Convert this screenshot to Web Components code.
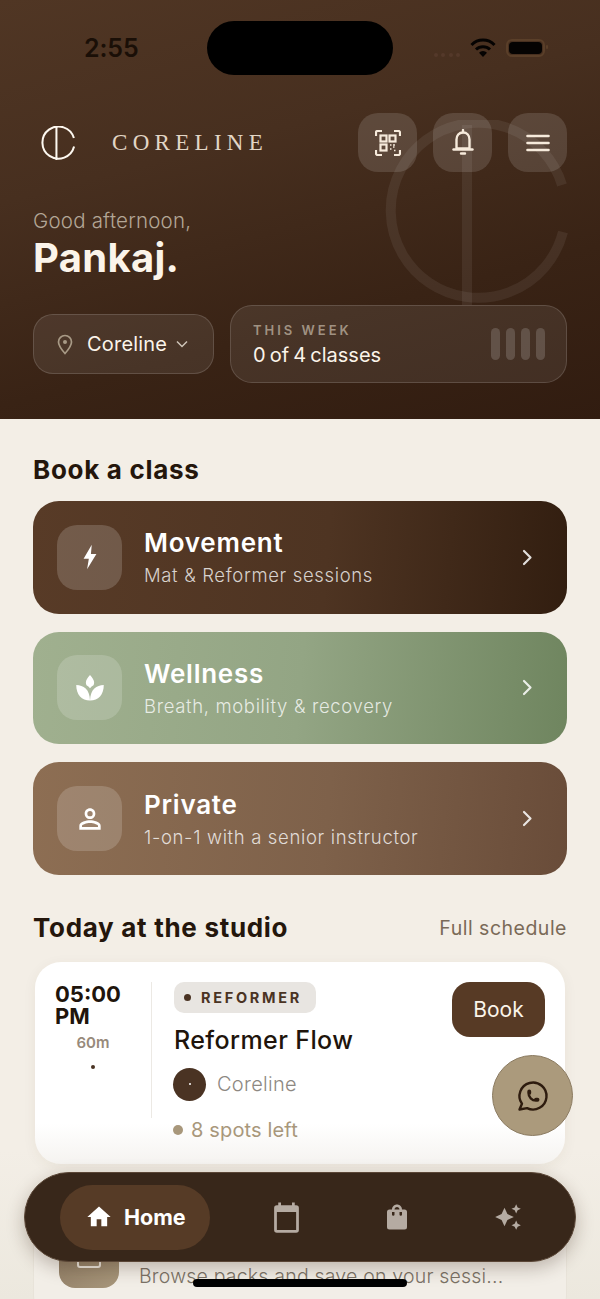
<!DOCTYPE html>
<html lang="en">
<head>
<meta charset="utf-8">
<title>Coreline</title>
<style>
	html, body { margin: 0; height: 1299px; overflow: hidden; }
	body { font-family: Inter, "Liberation Sans", sans-serif; background: linear-gradient(to bottom, #f3eee6 0, #f3eee6 1150px, #ece8de 1299px); }
	.content { display: block; padding: 34px 33px 0; }
</style>
</head>
<body>
<script>
// Coreline mark, the same shape for the small logo and the header watermark
const mark = (stroke) => `<g fill="none" stroke="currentColor" stroke-width="${stroke}"><path d="M179 65A87.500 87.500 0 1 0 180 112"/><path d="M84 5V185"/></g>`;

class BaseEl extends HTMLElement {
	connectedCallback() {
		if (!this.shadowRoot) this.attachShadow({ mode: "open" });
		this.shadowRoot.innerHTML = this.render();
	}
}

class StatusBar extends BaseEl {
	render() {
		return `<style>
			:host { display: flex; align-items: center; height: 96px; margin-bottom: 17px; padding: 0 55px 0 84px; position: relative; color: #1a0f07; }
			.time { font: 600 25px/1 Inter, sans-serif; letter-spacing: -.1px; }
			.notch { position: absolute; left: 207px; top: 21px; width: 186px; height: 54px; border-radius: 27px; background: #000; }
			.right { margin-left: auto; display: flex; align-items: center; gap: 10px; }
			.dots { display: flex; gap: 3.500px; margin-top: 14px; }
			.dots i { width: 4px; height: 4px; border-radius: 50%; background: #54392a; }
			.batt { width: 33px; height: 12px; border: 2px solid #5a3f29; border-radius: 6px; padding: 1px; position: relative; }
			.batt b { display: block; height: 100%; background: #050302; border-radius: 4px; }
			.batt::after { content: ""; position: absolute; right: -5px; top: 4px; width: 2px; height: 4px; background: #5a3f29; border-radius: 1px; }
		</style>
		<span class="time">2:55</span>
		<div class="notch"></div>
		<div class="right">
			<div class="dots"><i></i><i></i><i></i><i></i></div>
			<svg width="26" height="20" viewBox="0 0 26 20" fill="none" stroke="#050302" stroke-width="3"><path d="M1.500 7a16 16 0 0 1 23 0"/><path d="M6 11.500a10 10 0 0 1 14 0"/><path d="M13 19l-4-4.200a5.600 5.600 0 0 1 8 0z" fill="#050302" stroke="none"/></svg>
			<div class="batt"><b></b></div>
		</div>`;
	}
}

class IconButton extends BaseEl {
	render() {
		return `<style>
			:host { display: flex; align-items: center; justify-content: center; width: 59px; height: 59px; border-radius: 20px; background: rgba(255,255,255,.13); color: #f6eadb; }
		</style><slot></slot>`;
	}
}

class AppHeader extends BaseEl {
	render() {
		return `<style>
			:host { display: block; position: relative; overflow: hidden; height: 419px; box-sizing: border-box; background: linear-gradient(165deg, #503624 0%, #472f1f 35%, #392315 70%, #311c10 100%); color: #fbf4ea; }
			.mark { position: absolute; left: 383px; top: 120px; color: rgba(255,255,255,.065); }
			.top { display: flex; align-items: center; padding: 0 33px; position: relative; }
			.logo { margin-left: 8px; color: #fdf8f0; }
			.word { margin-left: 37px; font: 400 23px/1 "Liberation Serif", serif; letter-spacing: 5.300px; color: #e2d6c6; }
			.btns { margin-left: auto; display: flex; gap: 16px; }
			.hello { position: relative; padding: 37px 33px 0; font-weight: 300; font-size: 20.500px; line-height: 24px; color: #b3a696; letter-spacing: .2px; }
			.name { position: relative; padding: 3px 33px 0; font-weight: 700; font-size: 40px; line-height: 44px; color: #fbf4ea; letter-spacing: .3px; }
			.row { position: relative; margin-top: 25px; padding: 0 33px; display: flex; align-items: center; gap: 16px; }
		</style>
		<status-bar></status-bar>
		<svg class="mark" width="185" height="185" viewBox="0 0 185 185">${mark(10)}</svg>
		<div class="top">
			<svg class="logo" width="34" height="34" viewBox="0 0 185 185">${mark(11)}</svg>
			<span class="word">CORELINE</span>
			<div class="btns">
				<icon-button><svg width="26" height="26" viewBox="0 0 26 26" fill="none" stroke="currentColor" stroke-width="2.200"><path d="M1 6V2.500A1.500 1.500 0 0 1 2.500 1H7M19 1h4.500A1.500 1.500 0 0 1 25 2.500V6M25 20v3.500a1.500 1.500 0 0 1-1.500 1.500H19M7 25H2.500A1.500 1.500 0 0 1 1 23.500V20"/><rect x="5.500" y="5.500" width="6" height="6"/><rect x="14.500" y="5.500" width="6" height="6"/><rect x="5.500" y="14.500" width="6" height="6"/><path d="M15 15h1.500M18 17h1.500M15 19h1.500M19 20.500h1.500M18 15h2" stroke-width="1.500"/></svg></icon-button>
				<icon-button><svg width="26" height="28" viewBox="0 0 26 28" fill="none" stroke="currentColor" stroke-width="2.400" stroke-linejoin="round"><path d="M13 3.500c-4 0-6.500 3-6.500 7v9h13v-9c0-4-2.500-7-6.500-7z"/><path d="M3.500 20.500h19" stroke-linecap="round"/><path d="M11 24.500h4M13 1v2" stroke-linecap="round"/></svg></icon-button>
				<icon-button><svg width="24" height="18" viewBox="0 0 24 18" fill="none" stroke="currentColor" stroke-width="2.600" stroke-linecap="round"><path d="M1.500 2h21M1.500 9h21M1.500 16h21"/></svg></icon-button>
			</div>
		</div>
		<div class="hello">Good afternoon,</div>
		<div class="name">Pankaj.</div>
		<div class="row"><location-pill></location-pill><week-card></week-card></div>`;
	}
}

class LocationPill extends BaseEl {
	render() {
		return `<style>
			:host { display: flex; align-items: center; box-sizing: border-box; width: 181px; height: 60px; padding-left: 23px; border-radius: 20px; background: rgba(255,255,255,.08); border: 1px solid rgba(255,255,255,.14); color: #fbf4ea; }
			span { margin-left: 14px; font-size: 20px; font-weight: 400; letter-spacing: .2px; }
			.ch { margin-left: 9px; }
		</style>
		<svg width="16" height="21" viewBox="0 0 16 21" fill="none" stroke="#a89a86" stroke-width="1.700"><path d="M8 19.500C4 15 1.500 11.500 1.500 8a6.500 6.500 0 0 1 13 0c0 3.500-2.500 7-6.500 11.500z"/><circle cx="8" cy="8" r="2" fill="#a89a86" stroke="none"/></svg>
		<span>Coreline</span>
		<svg class="ch" width="12" height="8" viewBox="0 0 12 8" fill="none" stroke="#cfc5b8" stroke-width="1.500"><path d="M1 1.500l5 5 5-5"/></svg>`;
	}
}

class WeekCard extends BaseEl {
	render() {
		return `<style>
			:host { flex: 1; display: flex; align-items: center; box-sizing: border-box; height: 78px; padding: 0 21px 0 22px; border-radius: 22px; background: rgba(255,255,255,.08); border: 1px solid rgba(255,255,255,.14); }
			.txt { display: flex; flex-direction: column; gap: 5px; }
			.lab { font-size: 13px; font-weight: 600; letter-spacing: 3px; color: #a09282; line-height: 16px; }
			.val { font-size: 20px; line-height: 24px; color: #fbf4ea; word-spacing: -1.500px; }
			.bars { margin-left: auto; display: flex; gap: 6px; }
			.bars i { width: 9px; height: 32px; border-radius: 5px; background: rgba(255,255,255,.16); }
		</style>
		<div class="txt"><div class="lab">THIS WEEK</div><div class="val">0 of 4 classes</div></div>
		<div class="bars"><i></i><i></i><i></i><i></i></div>`;
	}
}

class SectionHead extends BaseEl {
	render() {
		return `<style>
			:host { display: flex; align-items: center; justify-content: space-between; height: 32px; color: #24160c; }
			h2 { margin: 0; font-size: 26px; font-weight: 700; letter-spacing: .7px; }
			a { font-size: 19.500px; color: #7a6a58; letter-spacing: .5px; }
		</style>
		<h2>${this.getAttribute("label")}</h2>
		${this.hasAttribute("link") ? `<a>${this.getAttribute("link")}</a>` : ""}`;
	}
}

const CARD_BG = {
	movement: "linear-gradient(95deg, #583b27 0%, #4e3422 55%, #321e10 100%)",
	wellness: "linear-gradient(95deg, #a0b08f 0%, #93a584 50%, #6f855f 100%)",
	private: "linear-gradient(95deg, #8d6e53 0%, #7e614a 55%, #694c39 100%)",
};

class ClassCard extends BaseEl {
	render() {
		return `<style>
			:host { display: flex; align-items: center; height: 112.670px; box-sizing: border-box; padding: 0 34px 0 24px; border-radius: 26px; background: ${CARD_BG[this.getAttribute("kind")]}; color: #fff; margin-bottom: 18px; }
			.tile { width: 65px; height: 65px; border-radius: 20px; background: rgba(255,255,255,.17); display: flex; align-items: center; justify-content: center; }
			.txt { margin-left: 22px; }
			.t { font-size: 26px; font-weight: 600; line-height: 32px; letter-spacing: .75px; }
			.s { font-size: 18.500px; font-weight: 300; line-height: 24px; margin-top: 4px; color: rgba(255,255,255,.78); letter-spacing: .65px; }
			.ch { margin-left: auto; }
		</style>
		<div class="tile"><slot></slot></div>
		<div class="txt"><div class="t">${this.getAttribute("label")}</div><div class="s">${this.getAttribute("sub")}</div></div>
		<svg class="ch" width="11" height="17" viewBox="0 0 11 17" fill="none" stroke="rgba(255,255,255,.85)" stroke-width="2.200" stroke-linecap="round" stroke-linejoin="round"><path d="M2 2l6.500 6.500L2 15"/></svg>`;
	}
}

class SessionCard extends BaseEl {
	render() {
		return `<style>
			:host { display: flex; box-sizing: border-box; height: 202px; margin: 18px 2px; padding: 20px 20px 0; border-radius: 26px; background: linear-gradient(to bottom, #fff 80%, #f5f3f0 100%); box-shadow: 0 3px 14px rgba(90,60,30,.06); color: #20140b; }
			.when { width: 96px; flex: none; }
			.tm { width: 76px; font-size: 22px; font-weight: 700; line-height: 22px; padding-top: 1px; }
			.dur { width: 76px; text-align: center; font-size: 15px; font-weight: 600; color: #978a7b; margin-top: 6px; line-height: 20px; }
			.dot { width: 4px; height: 4px; border-radius: 50%; background: #4a3323; margin: 12px 0 0 36px; }
			.div { width: 1px; height: 136px; background: #ece9e4; margin-right: 22px; }
			.main { flex: 1; }
			.tag { display: inline-flex; align-items: center; height: 31px; padding: 0 14px 0 10px; border-radius: 10px; background: #e8e5e1; font-size: 14.500px; font-weight: 700; letter-spacing: 2.700px; color: #4a3323; }
			.tag i { width: 7px; height: 7px; border-radius: 50%; background: #4a3323; margin-right: 10px; }
			.name { font-size: 25px; font-weight: 500; line-height: 30px; margin-top: 12px; letter-spacing: .4px; }
			.by { display: flex; align-items: center; margin-top: 13px; margin-left: -1px; font-size: 20px; font-weight: 300; color: #8d8882; letter-spacing: .3px; }
			.av { width: 33px; height: 33px; border-radius: 50%; background: #4a3323; margin-right: 11px; display: flex; align-items: center; justify-content: center; }
			.av i { width: 2px; height: 2px; border-radius: 50%; background: #fff; }
			.spots { display: flex; align-items: center; margin-top: 17px; margin-left: -1px; font-size: 20px; color: #a8977b; letter-spacing: .15px; }
			.spots i { width: 10px; height: 10px; border-radius: 50%; background: #a8977b; margin-right: 8px; }
			.book { flex: none; width: 93px; height: 55px; border-radius: 18px; background: #573a25; color: #fbf4ea; font-size: 21px; display: flex; align-items: center; justify-content: center; }
		</style>
		<div class="when"><div class="tm">05:00<br>PM</div><div class="dur">60m</div><div class="dot"></div></div>
		<div class="div"></div>
		<div class="main">
			<div class="tag"><i></i>REFORMER</div>
			<div class="name">Reformer Flow</div>
			<div class="by"><div class="av"><i></i></div>Coreline</div>
			<div class="spots"><i></i>8 spots left</div>
		</div>
		<div class="book">Book</div>`;
	}
}

class PromoCard extends BaseEl {
	render() {
		return `<style>
			:host { display: flex; box-sizing: border-box; height: 140px; padding: 45px 40px 0 25px; border-radius: 26px; background: #f2eee7; border: 1px solid #e8e3d9; color: #7b7266; }
			.tile { flex: none; width: 60px; height: 60px; box-sizing: border-box; border-radius: 16px; background: linear-gradient(135deg, #8a7760, #a8977b); margin-right: 20px; padding-top: 20px; display: flex; justify-content: center; }
			.tile b { width: 24px; height: 20px; box-sizing: border-box; border: 2px solid #efe9df; border-radius: 3px; }
			.s { margin-top: 36px; font-size: 19.500px; font-weight: 300; letter-spacing: .2px; line-height: 24px; }
			.ch { margin: 18px 0 0 auto; }
		</style>
		<div class="tile"><b></b></div>
		<div class="s">Browse packs and save on your sessi...</div>
		<svg class="ch" width="10" height="15" viewBox="0 0 10 15" fill="none" stroke="#8a7a66" stroke-width="2"><path d="M2 1.500l6 6-6 6"/></svg>`;
	}
}

class BottomNav extends BaseEl {
	render() {
		return `<style>
			:host { display: flex; align-items: center; position: fixed; left: 24px; top: 1172px; width: 552px; height: 90px; box-sizing: border-box; padding-left: 35px; border-radius: 45px; background: #38271a; border: 1px solid #5a4636; box-shadow: 0 6px 18px rgba(50,30,15,.28); }
			.home { display: flex; align-items: center; gap: 11px; width: 150px; height: 65px; box-sizing: border-box; padding-left: 25px; border-radius: 33px; background: #563b26; color: #fff; font-size: 21.500px; font-weight: 700; }
			svg { display: block; flex: none; }
			.cal { margin-left: 60px; }
			.bag { margin-left: 79px; }
			.spark { margin-left: 82px; }
		</style>
		<div class="home"><svg width="28" height="28" viewBox="0 0 24 24" fill="#fff"><path d="M10 20v-6h4v6h5v-8h3L12 3 2 12h3v8z"/></svg>Home</div>
		<svg class="cal" width="33" height="33" viewBox="0 0 24 24" fill="#b5aba2"><path d="M19 3h-1V1h-2v2H8V1H6v2H5a2 2 0 0 0-2 2v16a2 2 0 0 0 2 2h14a2 2 0 0 0 2-2V5a2 2 0 0 0-2-2zm0 18H5V8h14v13z"/></svg>
		<svg class="bag" width="30" height="30" viewBox="0 0 24 24" fill="#b5aba2"><path d="M18 6h-2c0-2.210-1.790-4-4-4S8 3.790 8 6H6a2 2 0 0 0-2 2v12a2 2 0 0 0 2 2h12a2 2 0 0 0 2-2V8a2 2 0 0 0-2-2zm-8 4a1 1 0 0 1-2 0V8h2v2zm2-6c1.100 0 2 .9 2 2h-4c0-1.100.9-2 2-2zm4 6a1 1 0 0 1-2 0V8h2v2z"/></svg>
		<svg class="spark" width="28" height="28" viewBox="0 0 24 24" fill="#b5aba2"><path d="M19 9l1.250-2.750L23 5l-2.750-1.250L19 1l-1.250 2.750L15 5l2.750 1.250L19 9zm-7.500.5L9 4 6.500 9.500 1 12l5.500 2.500L9 20l2.500-5.500L17 12l-5.500-2.500zM19 15l-1.250 2.750L15 19l2.750 1.250L19 23l1.250-2.750L23 19l-2.750-1.250L19 15z"/></svg>`;
	}
}

class ChatFab extends BaseEl {
	render() {
		return `<style>
			:host { display: flex; align-items: center; justify-content: center; position: fixed; left: 492px; top: 1055px; width: 81px; height: 81px; box-sizing: border-box; border-radius: 50%; background: #ab9a7c; border: 1.500px solid #8a7a60; }
		</style>
		<svg width="36" height="36" viewBox="0 0 24 24" fill="none" stroke="#2e1c0f" stroke-width="1.600" stroke-linecap="round" stroke-linejoin="round"><path d="M3 21l1.650-3.800a9 9 0 1 1 3.400 2.900L3 21"/><path d="M9 10a.5.5 0 0 0 1 0V9a.5.5 0 0 0-1 0v1a5 5 0 0 0 5 5h1a.5.5 0 0 0 0-1h-1a.5.5 0 0 0 0 1"/></svg>`;
	}
}

class HomeBar extends BaseEl {
	render() {
		return `<style>
			:host { display: block; position: fixed; left: 193px; top: 1279px; width: 214px; height: 8px; border-radius: 4px; background: #000; }
		</style>`;
	}
}

customElements.define("status-bar", StatusBar);
customElements.define("icon-button", IconButton);
customElements.define("app-header", AppHeader);
customElements.define("location-pill", LocationPill);
customElements.define("week-card", WeekCard);
customElements.define("section-head", SectionHead);
customElements.define("class-card", ClassCard);
customElements.define("session-card", SessionCard);
customElements.define("promo-card", PromoCard);
customElements.define("bottom-nav", BottomNav);
customElements.define("chat-fab", ChatFab);
customElements.define("home-bar", HomeBar);
</script>
<app-header></app-header>
<main class="content">
	<section-head label="Book a class" style="margin-bottom:16px"></section-head>
	<class-card kind="movement" label="Movement" sub="Mat &amp; Reformer sessions">
		<svg width="28" height="28" viewBox="0 0 24 24" fill="#fff"><path d="M13.500 1.500 6.500 13.500h4.500L9.500 22.500 17.500 9.500h-4.700z"/></svg>
	</class-card>
	<class-card kind="wellness" label="Wellness" sub="Breath, mobility &amp; recovery">
		<svg width="30" height="30" viewBox="0 0 24 24" fill="#fff"><path d="M12 1.500c2 2.200 3.300 4.200 3.300 6 0 .8-.2 1.500-.5 2.200-1.100.6-2 1.400-2.800 2.400-.8-1-1.700-1.800-2.800-2.400-.3-.7-.5-1.400-.5-2.200 0-1.800 1.300-3.800 3.300-6z"/><path d="M1 9.500c5.700.2 10.700 3 11 12.500C5.300 22 1 17.400 1 9.500z"/><path d="M23 9.500c-5.700.2-10.700 3-11 12.500 6.700 0 11-4.600 11-12.500z"/></svg>
	</class-card>
	<class-card kind="private" label="Private" sub="1-on-1 with a senior instructor">
		<svg width="32" height="32" viewBox="0 0 24 24" fill="#fff"><path d="M12 6a2 2 0 1 1 0 4 2 2 0 0 1 0-4m0 9c2.700 0 5.800 1.290 6 2v1H6v-.99c.2-.72 3.300-2.010 6-2.010M12 4C9.790 4 8 5.790 8 8s1.790 4 4 4 4-1.790 4-4-1.790-4-4-4zm0 9c-2.670 0-8 1.340-8 4v3h16v-3c0-2.660-5.330-4-8-4z"/></svg>
	</class-card>
	<section-head label="Today at the studio" link="Full schedule" style="margin-top:37px"></section-head>
	<session-card></session-card>
	<promo-card></promo-card>
</main>
<chat-fab></chat-fab>
<bottom-nav></bottom-nav>
<home-bar></home-bar>
</body>
</html>
